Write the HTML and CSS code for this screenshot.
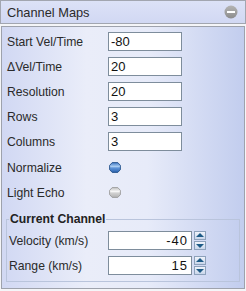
FILE: index.html
```html
<!DOCTYPE html>
<html lang="en">
<head>
    <meta charset="UTF-8">
    <meta name="viewport" content="width=device-width, initial-scale=1.0">
    <title>Channel Maps</title>
    <link rel="stylesheet" href="styles.css">
</head>
<body>
    <div class="panel">
        <div class="titlebar">
            <span class="title">Channel Maps</span>
            <svg class="collapse" width="14" height="14" viewBox="0 0 14 14">
                <defs>
                    <linearGradient id="gMin" x1="0" y1="0" x2="0" y2="1">
                        <stop offset="0" stop-color="#b4b4b4"/>
                        <stop offset="1" stop-color="#8c8c8c"/>
                    </linearGradient>
                </defs>
                <circle cx="7" cy="7" r="6.5" fill="url(#gMin)"/>
                <rect x="3" y="6" width="8" height="2" fill="#fff"/>
            </svg>
        </div>
        <div class="content">
            <div class="form-grid">
                <label>Start Vel/Time</label>
                <input type="text" value="-80">

                <label>&Delta;Vel/Time</label>
                <input type="text" value="20">

                <label>Resolution</label>
                <input type="text" value="20">

                <label>Rows</label>
                <input type="text" value="3">

                <label>Columns</label>
                <input type="text" value="3">

                <label>Normalize</label>
                <svg class="gem" width="12" height="11" viewBox="0 0 12 11">
                    <defs>
                        <linearGradient id="gBlue" x1="0" y1="0" x2="0" y2="1">
                            <stop offset="0" stop-color="#3f78c4"/>
                            <stop offset="0.4" stop-color="#a9ccf2"/>
                            <stop offset="0.55" stop-color="#5f95da"/>
                            <stop offset="1" stop-color="#2c62ad"/>
                        </linearGradient>
                    </defs>
                    <path d="M3.2 0.6 H8.8 L11.4 3.4 V7.6 L8.8 10.4 H3.2 L0.6 7.6 V3.4 Z" fill="url(#gBlue)" stroke="#24508a" stroke-width="0.9" stroke-linejoin="round"/>
                </svg>

                <label>Light Echo</label>
                <svg class="gem" width="12" height="11" viewBox="0 0 12 11">
                    <defs>
                        <linearGradient id="gGray" x1="0" y1="0" x2="0" y2="1">
                            <stop offset="0" stop-color="#c4c4c4"/>
                            <stop offset="0.4" stop-color="#f6f6f6"/>
                            <stop offset="0.55" stop-color="#d2d2d2"/>
                            <stop offset="1" stop-color="#b2b2b2"/>
                        </linearGradient>
                    </defs>
                    <path d="M3.2 0.6 H8.8 L11.4 3.4 V7.6 L8.8 10.4 H3.2 L0.6 7.6 V3.4 Z" fill="url(#gGray)" stroke="#9a9a9a" stroke-width="0.9" stroke-linejoin="round"/>
                </svg>
            </div>

            <fieldset class="current">
                <legend>Current Channel</legend>
                <div class="spin-row">
                    <label>Velocity (km/s)</label>
                    <input type="text" class="num" value="-40">
                    <div class="spinner">
                        <span class="spin-btn up"></span>
                        <span class="spin-btn down"></span>
                    </div>
                </div>
                <div class="spin-row">
                    <label>Range (km/s)</label>
                    <input type="text" class="num" value="15">
                    <div class="spinner">
                        <span class="spin-btn up"></span>
                        <span class="spin-btn down"></span>
                    </div>
                </div>
            </fieldset>
        </div>
    </div>
</body>
</html>
```

FILE: styles.css
```css
body {
    margin: 0;
    font-family: "Liberation Sans", Arial, sans-serif;
    font-size: 12.2px;
    color: #222;
    background: #f4f5f8;
}
.panel {
    width: 246px;
    height: 291px;
    box-sizing: border-box;
    display: flex;
    flex-direction: column;
    gap: 2px;
}
.titlebar {
    height: 24px;
    box-sizing: border-box;
    border: 1px solid #a2a6b0;
    background: linear-gradient(to bottom, #dce2f7, #d1d8f3);
    display: flex;
    align-items: center;
    justify-content: space-between;
    padding: 0 7px 0 6px;
}
.title {
    color: #2a2a2a;
    font-size: 12.8px;
}
.collapse {
    display: block;
}
.content {
    flex: 1;
    margin: 0 1px 2px 1px;
    border: 1px solid #9ea2ac;
    background: linear-gradient(to right, #d1d8f3 0%, #eaedf9 35%, #e7ebf9 60%, #c2cdee 100%);
    padding: 5px 4px 0 5px;
    display: flex;
    flex-direction: column;
}
.form-grid {
    display: grid;
    grid-template-columns: 101px 74px;
    grid-auto-rows: 19px;
    row-gap: 6px;
    align-items: center;
}
.form-grid label {
    color: #2a2a2a;
}
.form-grid label:nth-last-of-type(-n+2) {
    position: relative;
    top: 1px;
}
input[type="text"] {
    height: 19px;
    box-sizing: border-box;
    border: 1px solid #7e8d9c;
    background: #fff;
    font-family: "Liberation Sans", Arial, sans-serif;
    font-size: 13px;
    color: #111;
    padding: 0 2px;
    margin: 0;
    outline: none;
}
.gem {
    display: block;
    margin: 2px 0 0 1px;
}
.current {
    margin: 11px 0 0 -1px;
    border: 1px solid #b9c4dc;
    padding: 5px 2px 6px 2px;
    display: flex;
    flex-direction: column;
    gap: 6px;
}
.current legend {
    font-weight: bold;
    font-size: 12.2px;
    padding: 0 1px;
    margin-left: 0;
    color: #222;
}
.spin-row {
    display: flex;
    align-items: center;
    height: 19px;
}
.spin-row label {
    width: 99px;
    color: #2a2a2a;
}
.spin-row .num {
    width: 84px;
    text-align: right;
    padding-right: 3px;
    letter-spacing: 1px;
}
.spinner {
    display: flex;
    flex-direction: column;
    margin-left: 2px;
    height: 19px;
}
.spin-btn {
    width: 12px;
    height: 9px;
    box-sizing: border-box;
    border: 1px solid #8da1bb;
    background: linear-gradient(to bottom, #f0f4fb, #c9d6ea);
    position: relative;
}
.spin-btn + .spin-btn {
    margin-top: 1px;
}
.spin-btn::after {
    content: "";
    position: absolute;
    left: 1px;
    width: 0;
    height: 0;
    border-left: 4px solid transparent;
    border-right: 4px solid transparent;
}
.spin-btn.up::after {
    top: 1px;
    border-bottom: 4px solid #1d5a86;
}
.spin-btn.down::after {
    top: 2px;
    border-top: 4px solid #1d5a86;
}
```
